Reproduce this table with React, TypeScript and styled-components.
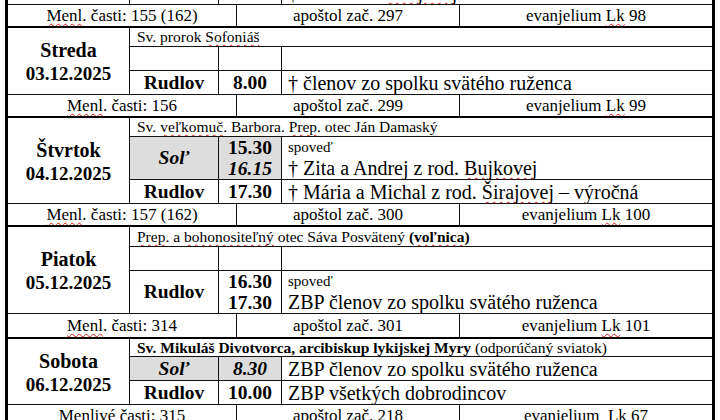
import React from 'react';
import styled, { createGlobalStyle } from 'styled-components';

type Time = { t: string; italic?: boolean };
type Mass = {
  place?: string;
  salt?: boolean;
  times?: Time[];
  note?: string;
  text?: React.ReactNode;
  h: number;
};
type Day = {
  name: string;
  date: string;
  feast: React.ReactNode;
  feastH: number;
  masses: Mass[];
  readings: [React.ReactNode, string, React.ReactNode];
  readH: number;
};

const Global = createGlobalStyle`
  html, body {
    margin: 0;
    padding: 0;
    background: #fff;
  }
  #root, #root * {
    font-family: "Liberation Serif", "Times New Roman", serif !important;
  }
`;

// spell-check squiggle from Word
const Sp = styled.span`
  text-decoration: underline wavy #e02020;
  text-decoration-thickness: 1px;
  text-underline-offset: 2px;
  text-decoration-skip-ink: none;
`;

const days: Day[] = [
  {
    name: 'Streda',
    date: '03.12.2025',
    feast: <>Sv. prorok <Sp>Sofoniáš</Sp></>,
    feastH: 20,
    masses: [
      { h: 24 },
      { place: 'Rudlov', times: [{ t: '8.00' }], text: '† členov zo spolku svätého ruženca', h: 24 },
    ],
    readings: [<><Sp>Menl</Sp>. časti: 156</>, 'apoštol zač. 299', <>evanjelium <Sp>Lk</Sp> 99</>],
    readH: 22,
  },
  {
    name: 'Štvrtok',
    date: '04.12.2025',
    feast: <>Sv. <Sp>veľkomuč</Sp>. Barbora. <Sp>Prep</Sp>. otec Ján Damaský</>,
    feastH: 20,
    masses: [
      {
        place: 'Soľ',
        salt: true,
        times: [{ t: '15.30' }, { t: '16.15', italic: true }],
        note: 'spoveď',
        text: <>† Zita a Andrej z rod. <Sp>Bujkovej</Sp></>,
        h: 43,
      },
      { place: 'Rudlov', times: [{ t: '17.30' }], text: <>† Mária a Michal z rod. <Sp>Širajovej</Sp> – výročná</>, h: 24 },
    ],
    readings: [<><Sp>Menl</Sp>. časti: 157 (162)</>, 'apoštol zač. 300', <>evanjelium <Sp>Lk</Sp> 100</>],
    readH: 22,
  },
  {
    name: 'Piatok',
    date: '05.12.2025',
    feast: <><Sp>Prep</Sp>. a <Sp>bohonositeľný</Sp> otec Sáva Posvätený <b>(<Sp>voľnica</Sp>)</b></>,
    feastH: 21,
    masses: [
      { h: 24 },
      {
        place: 'Rudlov',
        times: [{ t: '16.30' }, { t: '17.30' }],
        note: 'spoveď',
        text: 'ZBP členov zo spolku svätého ruženca',
        h: 42,
      },
    ],
    readings: [<><Sp>Menl</Sp>. časti: 314</>, 'apoštol zač. 301', <>evanjelium <Sp>Lk</Sp> 101</>],
    readH: 24,
  },
  {
    name: 'Sobota',
    date: '06.12.2025',
    feast: <><b>Sv. Mikuláš Divotvorca, arcibiskup <Sp>lykijskej</Sp> <Sp>Myry</Sp></b> (odporúčaný sviatok)</>,
    feastH: 19,
    masses: [
      { place: 'Soľ', salt: true, times: [{ t: '8.30', italic: true }], text: 'ZBP členov zo spolku svätého ruženca', h: 24 },
      { place: 'Rudlov', times: [{ t: '10.00' }], text: 'ZBP všetkých dobrodincov', h: 24 },
    ],
    readings: [<><Sp>Menlivé</Sp> časti: 315</>, 'apoštol zač. 218', <>evanjelium  <Sp>Lk</Sp> 67</>],
    readH: 22,
  },
];

function MassCells({ m }: { m: Mass }) {
  return (
    <>
      <PlaceCell $salt={m.salt}>{m.place}</PlaceCell>
      <TimeCell colSpan={2} $salt={m.salt}>
        {m.times?.map((t) => (
          <TimeLine key={t.t} $italic={t.italic}>{t.t}</TimeLine>
        ))}
      </TimeCell>
      <IntentCell colSpan={2}>
        {m.note && <Note>{m.note}</Note>}
        {m.text}
      </IntentCell>
    </>
  );
}

function Readings({ cells, h }: { cells: Day['readings']; h: number }) {
  return (
    <ReadRow style={{ height: h }}>
      <ReadCell colSpan={3}>{cells[0]}</ReadCell>
      <ReadCell colSpan={2}>{cells[1]}</ReadCell>
      <ReadCell>{cells[2]}</ReadCell>
    </ReadRow>
  );
}

export default function App() {
  return (
    <Page>
      <Global />
      <Sheet>
        <colgroup>
          <col style={{ width: 123 }} />
          <col style={{ width: 89 }} />
          <col style={{ width: 18 }} />
          <col style={{ width: 45 }} />
          <col style={{ width: 178 }} />
          <col />
        </colgroup>

        {/* koniec utorka, odrezaný hore */}
        <tbody>
          <MassRow style={{ height: 24 }}>
            <DayCell />
            <MassCells m={{ place: 'Rudlov', times: [{ t: '17.30' }], text: <>† Ján z rod. <Sp>Širajovej</Sp></>, h: 24 }} />
          </MassRow>
          <Readings cells={[<><Sp>Menl</Sp>. časti: 155 (162)</>, 'apoštol zač. 297', <>evanjelium <Sp>Lk</Sp> 98</>]} h={22} />
        </tbody>

        {days.map((d) => (
          <Block key={d.date}>
            <FeastRow style={{ height: d.feastH }}>
              <DayCell rowSpan={d.masses.length + 1}>
                <DayName>{d.name}</DayName>
                <DayDate>{d.date}</DayDate>
              </DayCell>
              <FeastCell colSpan={5}>{d.feast}</FeastCell>
            </FeastRow>
            {d.masses.map((m, i) => (
              <MassRow key={i} style={{ height: m.h }}>
                <MassCells m={m} />
              </MassRow>
            ))}
            <Readings cells={d.readings} h={d.readH} />
          </Block>
        ))}
      </Sheet>
    </Page>
  );
}

const Page = styled.div`
  width: 720px;
  height: 420px;
  overflow: hidden;
  background: #fff;
  padding-left: 5px;
  box-sizing: border-box;
`;

const Sheet = styled.table`
  table-layout: fixed;
  width: 710px;
  margin-top: -20px;
  border-collapse: collapse;
  border-left: 3px solid #000;
  border-right: 3px solid #000;
  color: #000;

  td {
    padding: 0;
    border: 1px solid #111;
    white-space: nowrap;
    overflow: hidden;
  }
`;

const Block = styled.tbody`
  border-top: 2px solid #000;
`;

const FeastRow = styled.tr``;

const MassRow = styled.tr``;

const ReadRow = styled.tr`
  td {
    border-top: 1px solid #8c8c8c;
  }
`;

const DayCell = styled.td`
  text-align: center;
  vertical-align: middle;
  font-weight: bold;
  padding-top: 3px !important;
`;

const DayName = styled.div`
  font-size: 20px;
  line-height: 24px;
`;

const DayDate = styled.div`
  font-size: 19px;
  line-height: 24px;
`;

const FeastCell = styled.td`
  font-size: 15.5px;
  line-height: 17px;
  padding: 0 7px !important;
  vertical-align: middle;
`;

const PlaceCell = styled.td<{ $salt?: boolean }>`
  text-align: center;
  vertical-align: middle;
  font-size: 19.5px;
  font-weight: bold;
  font-style: ${(p) => (p.$salt ? 'italic' : 'normal')};
  background: ${(p) => (p.$salt ? '#dddddd' : 'transparent')};
  line-height: 22px;
`;

const TimeCell = styled.td<{ $salt?: boolean }>`
  text-align: center;
  vertical-align: middle;
  font-size: 19.5px;
  font-weight: bold;
  background: ${(p) => (p.$salt ? '#dddddd' : 'transparent')};
`;

const TimeLine = styled.div<{ $italic?: boolean }>`
  line-height: 21px;
  font-style: ${(p) => (p.$italic ? 'italic' : 'normal')};
`;

const IntentCell = styled.td`
  vertical-align: middle;
  font-size: 20px;
  line-height: 22px;
  padding: 0 6px !important;
`;

const Note = styled.div`
  font-size: 15px;
  line-height: 19px;
`;

const ReadCell = styled.td`
  text-align: center;
  vertical-align: middle;
  font-size: 17px;
  line-height: 19px;
  white-space: pre !important;
`;
